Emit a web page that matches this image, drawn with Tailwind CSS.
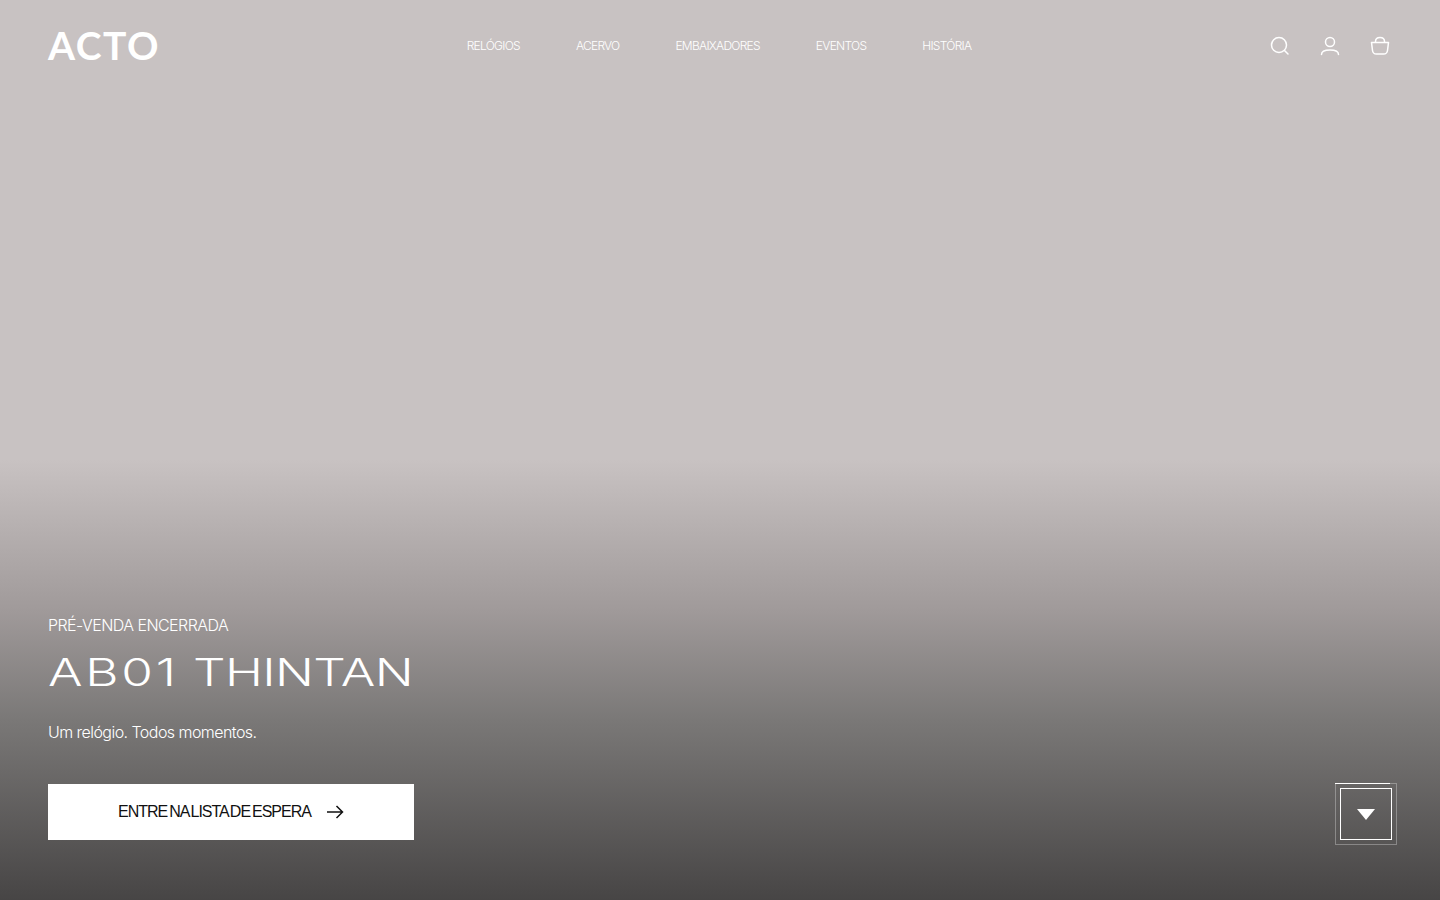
<!DOCTYPE html>
<html lang="pt-BR">
<head>
    <meta charset="UTF-8">
    <meta name="viewport" content="width=device-width, initial-scale=1.0">
    <title>ACTO</title>
    <script src="https://cdn.jsdelivr.net/npm/@tailwindcss/browser@4"></script>
</head>
<body class="font-['Inter',sans-serif] overflow-hidden">
    <main class="h-[900px] w-full flex flex-col justify-between bg-[linear-gradient(to_bottom,#c8c2c2_0,#c8c2c2_460px,#a09a9a_610px,#7a7877_720px,#474545_900px)] text-white">
        <!-- Header -->
        <header class="grid grid-cols-[1fr_auto_1fr] items-center pl-12 pr-[50px] h-[92px]">
            <a href="#" class="font-['Lato',sans-serif] font-bold text-[39px] leading-none tracking-[1.5px] text-white -mt-[2px]">ACTO</a>
            <nav class="flex items-center gap-[56px] text-[12px] tracking-[-0.72px] font-light text-white">
                <a href="#">RELÓGIOS</a>
                <a href="#">ACERVO</a>
                <a href="#">EMBAIXADORES</a>
                <a href="#">EVENTOS</a>
                <a href="#">HISTÓRIA</a>
            </nav>
            <div class="flex justify-end items-center gap-[30px]">
                <svg class="w-5 h-5" viewBox="0 0 20 20" fill="none" stroke="white" stroke-width="1.5" stroke-linecap="round"><circle cx="9" cy="9" r="7.500"/><path d="M14.500 14.500l3.500 3.500"/></svg>
                <svg class="w-5 h-5" viewBox="0 0 20 20" fill="none" stroke="white" stroke-width="1.5" stroke-linecap="round"><circle cx="10" cy="6" r="4.500"/><path d="M1.500 18.500c0-2.800 3-4.500 8.500-4.500s8.500 1.700 8.500 4.500"/></svg>
                <svg class="w-5 h-5" viewBox="0 0 20 20" fill="none" stroke="white" stroke-width="1.5" stroke-linejoin="round"><path d="M1.500 6.500h17l-1 8c-.3 2.300-1.700 3.500-4 3.500H6.500c-2.300 0-3.700-1.200-4-3.500z"/><path d="M5.500 6.500V5.500c0-2.700 1.800-4 4.500-4s4.500 1.300 4.500 4v1"/></svg>
            </div>
        </header>

        <!-- Hero content -->
        <section class="flex items-end justify-between pl-12 pr-12 pb-[60px]">
            <div class="w-[366px]">
                <p class="text-[16px] leading-5 tracking-[-0.55px] font-light -mt-[2px]">PRÉ-VENDA ENCERRADA</p>
                <h1 class="mt-[17px] h-[40px] font-light text-[38px] leading-[40px] whitespace-nowrap origin-left scale-x-[1.35]"><span class="tracking-[2px]">AB01</span> <span class="tracking-[-0.5px]">THINTAN</span></h1>
                <p class="mt-[28px] text-[16px] leading-6 font-light tracking-[-0.55px]">Um relógio. Todos momentos.</p>
                <a href="#" class="mt-[40px] flex items-center justify-center gap-[15px] h-14 bg-white text-[#111] font-['Liberation_Sans',sans-serif] text-[16px] tracking-[-1px] [word-spacing:-1.5px]">
                    ENTRE NA LISTA DE ESPERA
                    <svg class="w-[18px] h-[18px]" viewBox="0 0 18 18" fill="none" stroke="#111" stroke-width="1.5"><path d="M1 9h15.500M10.500 3l6 6-6 6"/></svg>
                </a>
            </div>
            <div class="relative w-[52px] h-[52px] border border-white flex items-center justify-center">
                <span class="absolute -inset-[6px] border border-white/30"></span>
                <span class="absolute -top-[6px] -left-[6px] w-[55px] h-px bg-white"></span>
                <svg class="w-[18px] h-[11px]" viewBox="0 0 18 11" fill="white"><path d="M0 0h18l-9 11z"/></svg>
            </div>
        </section>
    </main>
</body>
</html>
